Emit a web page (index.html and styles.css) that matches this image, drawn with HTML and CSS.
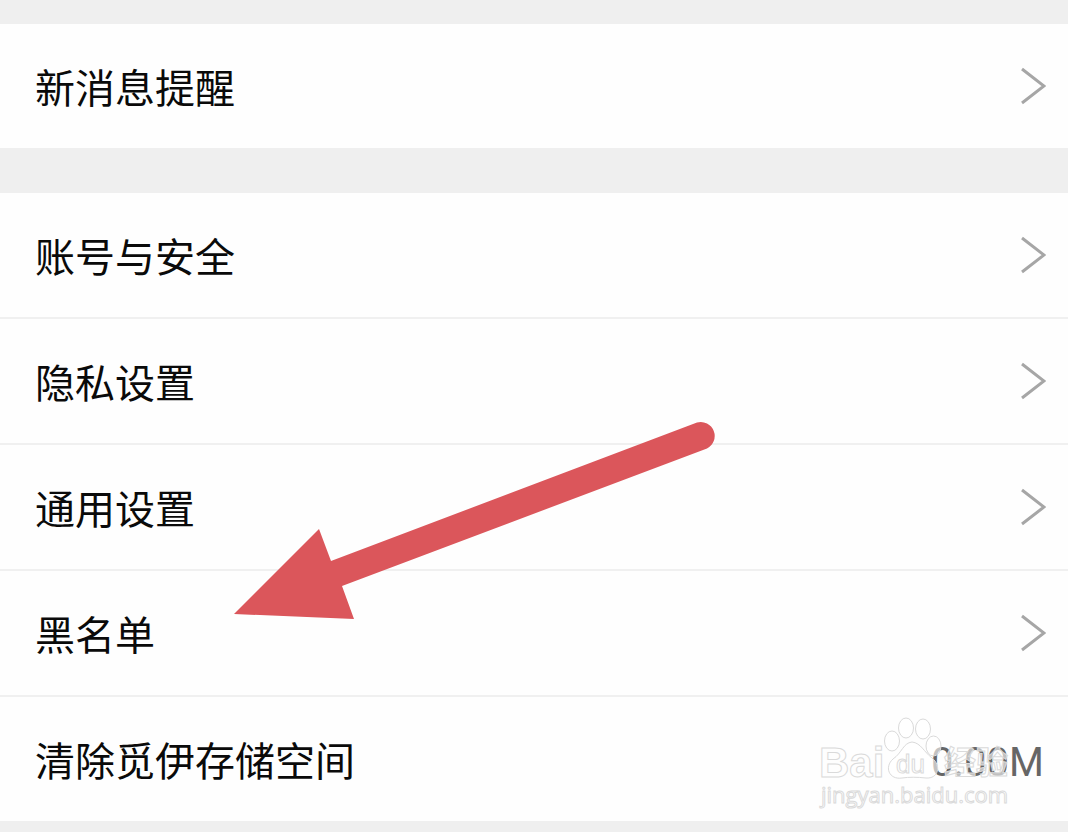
FILE: index.html
```
<!DOCTYPE html>
<html lang="zh-CN">
    <head>
        <meta charset="UTF-8" />
        <meta name="viewport" content="width=device-width, initial-scale=1" />
        <title>设置</title>
        <link rel="stylesheet" href="styles.css">
    </head>
    <body>
        <main class="settings">
            <nav class="group">
                <a class="row" href="#notifications">
                    <span>新消息提醒</span>
                    <svg class="chevron" viewBox="0 0 26 38"><path d="M2 2L24 19L2 36" /></svg>
                </a>
            </nav>

            <nav class="group">
                <a class="row" href="#account">
                    <span>账号与安全</span>
                    <svg class="chevron" viewBox="0 0 26 38"><path d="M2 2L24 19L2 36" /></svg>
                </a>
                <a class="row" href="#privacy">
                    <span>隐私设置</span>
                    <svg class="chevron" viewBox="0 0 26 38"><path d="M2 2L24 19L2 36" /></svg>
                </a>
                <a class="row" href="#general">
                    <span>通用设置</span>
                    <svg class="chevron" viewBox="0 0 26 38"><path d="M2 2L24 19L2 36" /></svg>
                </a>
                <a class="row" href="#blacklist">
                    <span>黑名单</span>
                    <svg class="chevron" viewBox="0 0 26 38"><path d="M2 2L24 19L2 36" /></svg>
                </a>
                <button class="row" type="button">
                    <span>清除觅伊存储空间</span>
                    <span class="size">0.00M</span>
                </button>

                <!-- arrow pointing at the blacklist row -->
                <svg class="arrow" viewBox="0 0 482 198" aria-hidden="true">
                    <path d="M0 193L85 108L97 140L463 1.5A14 14 0 0 1 473 27.5L108 165L120 198Z" />
                </svg>

                <svg class="watermark" viewBox="0 0 200 100" aria-hidden="true">
                    <text class="wm-name" x="1" y="62">Bai</text>
                    <ellipse cx="74" cy="26" rx="7.5" ry="10" />
                    <ellipse cx="88" cy="13" rx="7.5" ry="10" />
                    <ellipse cx="105" cy="14" rx="7.5" ry="10" />
                    <ellipse cx="115.5" cy="31" rx="7.5" ry="10" />
                    <path d="M94 27C103 28 106 37 114 43C124 51 120 64 108 63C99 62 91 62 84 63C71 65 66 52 75 44C84 38 85 28 94 27Z" />
                    <text class="wm-du" x="78" y="58">du</text>
                    <text class="wm-cn" x="126" y="59">经验</text>
                    <text class="wm-url" x="3" y="88">jingyan.baidu.com</text>
                </svg>
            </nav>
        </main>
    </body>
</html>
```
FILE: styles.css
```
body {
    margin: 0;
    background: #efefef;
    font-family: Roboto, 'Noto Sans CJK SC', sans-serif;
    font-size: 40px;
    line-height: 60px;
    color: #0a0a0a;
}

.settings {
    display: flex;
    flex-direction: column;
    gap: 45px;
    padding: 24px 0 11px;
}

.group {
    position: relative;
    background: #fefefe;
}

.row {
    display: flex;
    align-items: center;
    justify-content: space-between;
    box-sizing: border-box;
    width: 100%;
    padding: 28px 24px 28px 35px;
    border: 0;
    background: none;
    font: inherit;
    color: inherit;
    text-align: left;
    text-decoration: none;
}

.row span {
    padding-top: 8px;
}

.row + .row {
    border-top: 2px solid #f0f0f0;
}

.chevron {
    width: 26px;
    height: 38px;
    margin-right: -2px;
    fill: none;
    stroke: #a6a6a6;
    stroke-width: 3;
}

.row .size {
    color: #666;
}

.arrow {
    position: absolute;
    top: 228px;
    left: 234px;
    width: 482px;
    height: 198px;
    fill: #db565b;
}

.watermark {
    position: absolute;
    right: 50px;
    bottom: 6px;
    width: 200px;
    height: 100px;
    fill: rgba(255, 255, 255, 0.6);
    stroke: #dadada;
    stroke-width: 1;
    font-family: 'Open Sans', sans-serif;
    pointer-events: none;
}

.wm-name {
    font-family: 'Liberation Sans', sans-serif;
    font-size: 42px;
    font-weight: bold;
}

.wm-du {
    font-family: 'Liberation Sans', sans-serif;
    font-size: 26px;
}

.wm-cn {
    font-family: 'Noto Sans CJK SC', sans-serif;
    font-size: 32px;
    font-weight: bold;
}

.wm-url {
    font-size: 22px;
}
```
